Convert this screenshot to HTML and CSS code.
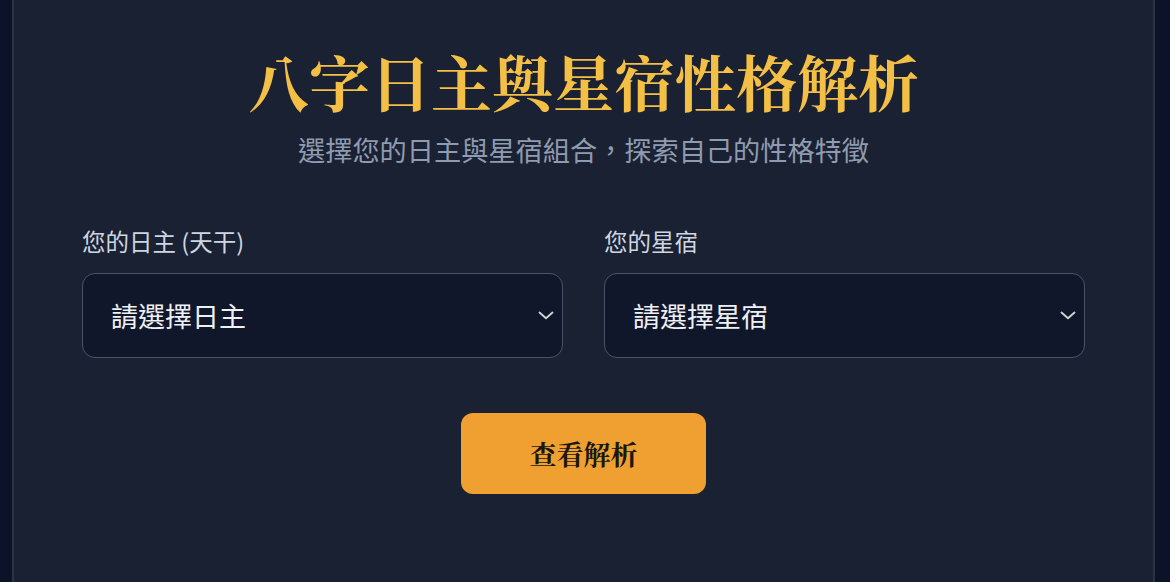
FILE: index.html
```html
<!DOCTYPE html>
<html lang="zh-Hant">
<head>
<meta charset="utf-8">
<title>八字日主與星宿性格解析</title>
<link rel="stylesheet" href="styles.css">
</head>
<body>
<main class="card">
  <header class="head">
    <h1 class="title">八字日主與星宿性格解析</h1>
    <p class="subtitle">選擇您的日主與星宿組合，探索自己的性格特徵</p>
  </header>
  <section class="fields">
    <div class="field">
      <label class="label">您的日主 (天干)</label>
      <div class="select">
        <span class="select-text">請選擇日主</span>
        <svg class="chev" width="16" height="9" viewBox="0 0 16 9"><path d="M1.5 1.5 L8 7.2 L14.5 1.5" fill="none" stroke="#d1d5db" stroke-width="1.8" stroke-linecap="round" stroke-linejoin="round"/></svg>
      </div>
    </div>
    <div class="field">
      <label class="label">您的星宿</label>
      <div class="select">
        <span class="select-text">請選擇星宿</span>
        <svg class="chev" width="16" height="9" viewBox="0 0 16 9"><path d="M1.5 1.5 L8 7.2 L14.5 1.5" fill="none" stroke="#d1d5db" stroke-width="1.8" stroke-linecap="round" stroke-linejoin="round"/></svg>
      </div>
    </div>
  </section>
  <div class="actions">
    <button class="btn">查看解析</button>
  </div>
</main>
</body>
</html>
```
FILE: styles.css
```css
html, body {
  margin: 0;
  padding: 0;
  background: #0d1228;
  height: 100%;
  overflow: hidden;
}
body {
  padding: 0 15px 0 12px;
  font-family: "Noto Sans CJK TC", "Noto Sans", sans-serif;
}
.card {
  margin-top: -20px;
  background: #1a2132;
  border: 2px solid #2c3347;
  border-radius: 16px;
  padding: 59px 68px 120px;
  box-sizing: border-box;
  min-height: 700px;
}
.head {
  text-align: center;
}
.title {
  margin: 0;
  font-family: "Noto Serif CJK TC", "Noto Serif TC", serif;
  font-size: 61px;
  line-height: 80px;
  font-weight: 700;
  color: #f4bf45;
  letter-spacing: 0;
}
.subtitle {
  margin: 8px 0 0;
  font-size: 27.2px;
  line-height: 40px;
  color: #8f9bb0;
}
.fields {
  display: grid;
  grid-template-columns: 1fr 1fr;
  column-gap: 41px;
  margin-top: 57px;
}
.field {
  display: flex;
  flex-direction: column;
}
.label {
  font-size: 23.5px;
  line-height: 30px;
  color: #cfd6e2;
  margin-bottom: 17px;
}
.select {
  display: flex;
  align-items: center;
  justify-content: space-between;
  height: 85px;
  box-sizing: border-box;
  border: 1.5px solid #4a5366;
  border-radius: 13px;
  background: #11172a;
  padding: 0 8px 0 28px;
}
.select-text {
  font-size: 27px;
  color: #eef0f4;
}
.chev {
  display: block;
}
.actions {
  display: flex;
  justify-content: center;
  margin-top: 55px;
}
.btn {
  width: 245px;
  height: 81px;
  border: none;
  border-radius: 12px;
  background: #f0a030;
  color: #1b1710;
  font-family: "Noto Serif CJK TC", "Noto Serif TC", serif;
  font-size: 27px;
  font-weight: 700;
  cursor: pointer;
}
```
